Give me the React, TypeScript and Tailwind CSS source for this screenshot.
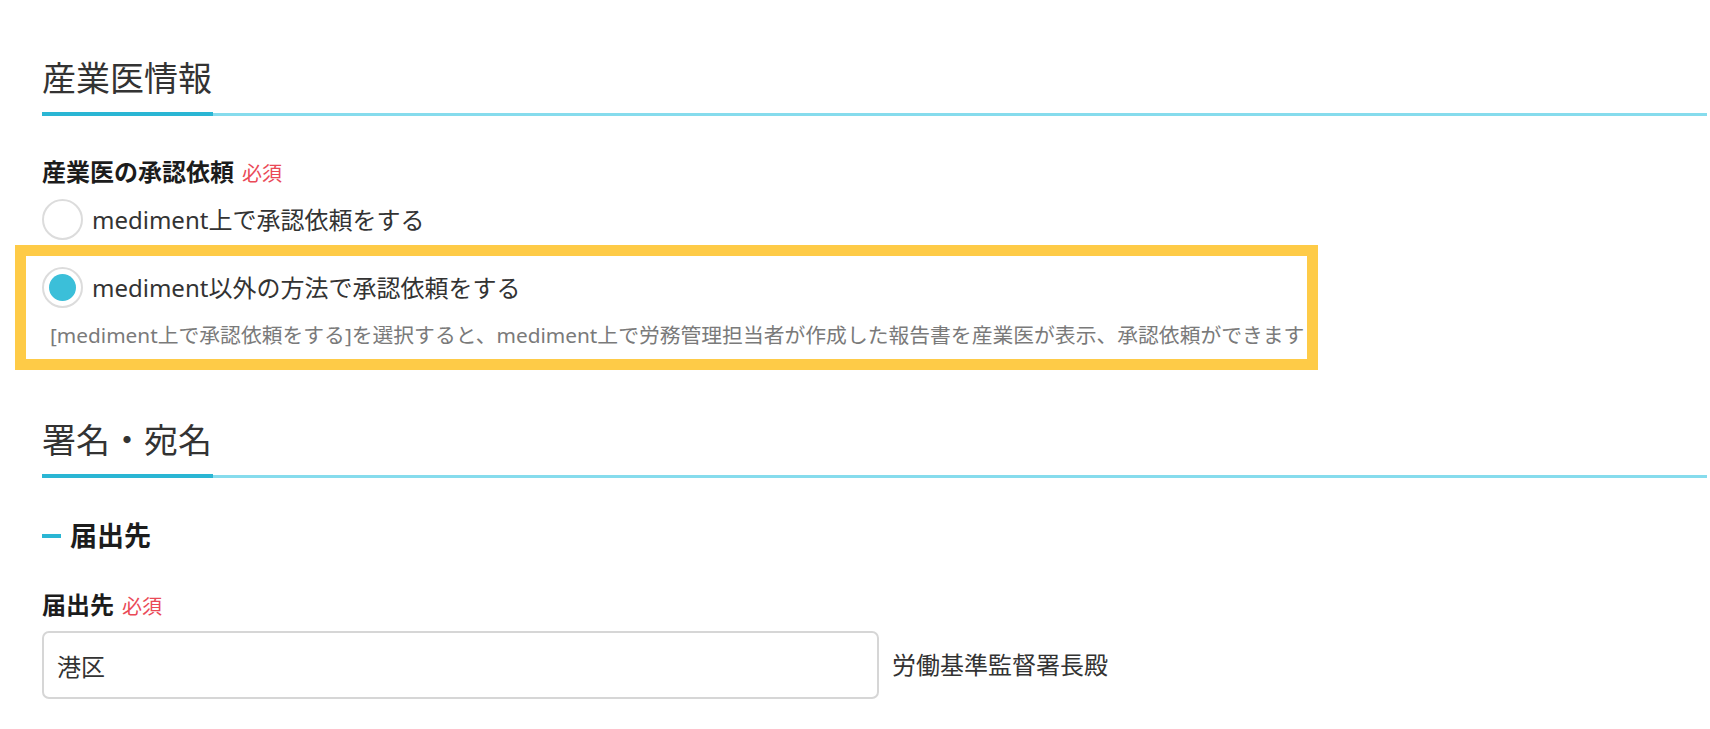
import React from "react";

function SectionHeading({ title }: { title: string }) {
  return (
    <div>
      <h2 className="text-[34px] leading-[34px] font-normal text-[#333333]">{title}</h2>
      <div className="mt-[17px] flex h-[4px] items-center">
        <div className="h-[4px] w-[171px] bg-[#2ab6d4]" />
        <div className="h-[3px] flex-1 bg-[#86dced]" />
      </div>
    </div>
  );
}

function Radio({ checked, label }: { checked: boolean; label: string }) {
  return (
    <label className="flex h-[41px] items-center">
      <span className="flex h-[41px] w-[41px] shrink-0 items-center justify-center rounded-full border-2 border-[#dcdcdc] bg-white">
        {checked && <span className="h-[27px] w-[27px] rounded-full bg-[#3bbfd9]" />}
      </span>
      <span className="ml-[9px] text-[24px] leading-[24px] text-[#333333]">{label}</span>
    </label>
  );
}

function FieldLabel({ text }: { text: string }) {
  return (
    <div className="flex items-baseline">
      <span className="text-[24px] leading-[24px] font-bold text-[#1c1c1c]">{text}</span>
      <span className="ml-[8px] text-[20px] leading-[20px] text-[#ea4a57]">必須</span>
    </div>
  );
}

export default function App() {
  return (
    <div
      className="min-h-screen bg-white pl-[42px] pr-[3px] pt-[61px]"
      style={{ fontFamily: '"Noto Sans", "Noto Sans CJK JP", sans-serif' }}
    >
      <SectionHeading title="産業医情報" />

      <div className="mt-[44px]">
        <FieldLabel text="産業医の承認依頼" />
      </div>

      <div className="mt-[15px]">
        <Radio checked={false} label="mediment上で承認依頼をする" />
      </div>

      <div className="ml-[-27px] mt-[5px] w-[1303px] border-[11px] border-[#fecb47] bg-white pb-[13px] pl-[16px] pt-[11px]">
        <Radio checked={true} label="mediment以外の方法で承認依頼をする" />
        <p className="ml-[8px] mt-[17px] whitespace-nowrap text-[20.8px] leading-[21px] text-[#7a7a7a]">
          [mediment上で承認依頼をする]を選択すると、mediment上で労務管理担当者が作成した報告書を産業医が表示、承認依頼ができます
        </p>
      </div>

      <div className="mt-[53px]">
        <SectionHeading title="署名・宛名" />
      </div>

      <div className="mt-[44px] flex items-center">
        <span className="h-[4px] w-[19px] bg-[#2ab6d4]" />
        <h3 className="ml-[9px] text-[27px] leading-[27px] font-bold text-[#1c1c1c]">届出先</h3>
      </div>

      <div className="mt-[44px]">
        <FieldLabel text="届出先" />
      </div>

      <div className="mt-[14px] flex items-center">
        <input
          className="h-[68px] w-[837px] rounded-[7px] border-2 border-[#d6d6d6] bg-white pl-[13px] text-[24px] text-[#333333] outline-none"
          style={{ fontFamily: '"Noto Sans", "Noto Sans CJK JP", sans-serif' }}
          defaultValue="港区"
        />
        <span className="ml-[13px] text-[24px] leading-[24px] text-[#333333]">労働基準監督署長殿</span>
      </div>
    </div>
  );
}
